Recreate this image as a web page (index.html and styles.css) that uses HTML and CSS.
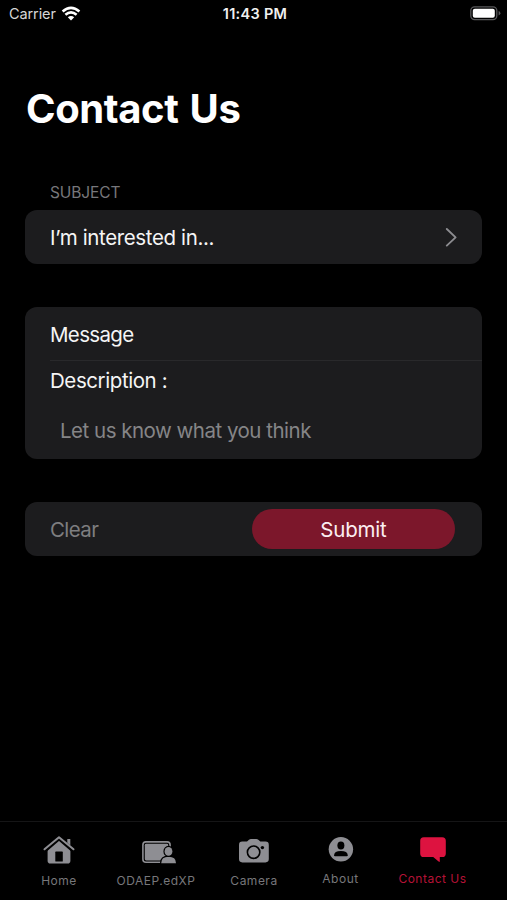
FILE: index.html
```html
<!DOCTYPE html>
<html lang="en">
<head>
<meta charset="utf-8">
<title>Contact Us</title>
<link rel="stylesheet" href="styles.css">
</head>
<body>
<div class="screen">
  <header class="status">
    <div class="status-left">
      <span class="carrier">Carrier</span>
      <svg class="wifi" width="20" height="15" viewBox="0 0 20 15" fill="none" stroke="#fff" stroke-width="2.6">
        <path d="M1.6 5.4Q10 -1.8 18.4 5.4"/>
        <path d="M4.4 8.8Q10 4 15.6 8.8"/>
        <path d="M6.8 11.3Q10 8.7 13.2 11.3L10 14.4Z" fill="#fff" stroke="none"/>
      </svg>
    </div>
    <span class="time">11:43 PM</span>
    <svg class="battery" width="31" height="15" viewBox="0 0 31 15">
      <rect x=".8" y=".8" width="26" height="12.8" rx="3.8" fill="none" stroke="#58585a" stroke-width="1.3"/>
      <rect x="2.8" y="2.7" width="22" height="9" rx="2" fill="#fff"/>
      <path d="M28.6 5Q30.4 5.6 30.4 7.2T28.6 9.4Z" fill="#58585a"/>
    </svg>
  </header>

  <main class="content">
    <h1 class="title">Contact Us</h1>
    <h2 class="section-label">SUBJECT</h2>
    <section class="card picker">
      <span class="picker-text">I’m interested in...</span>
      <svg width="12" height="20" viewBox="0 0 12 20" fill="none" stroke="#8c8c90" stroke-width="1.9" stroke-linecap="round" stroke-linejoin="round"><path d="M1.8 2L10.6 10.4L1.8 18.6"/></svg>
    </section>
    <section class="card form">
      <div class="message"><span class="message-text">Message</span></div>
      <div class="description"><span class="description-text">Description :</span></div>
      <div class="placeholder"><span class="placeholder-text">Let us know what you think</span></div>
    </section>
    <section class="card actions">
      <span class="clear">Clear</span>
      <button class="submit" type="button"><span>Submit</span></button>
    </section>
  </main>

  <nav class="tabs">
    <a class="tab">
      <svg width="32" height="28" viewBox="0 0 32 28" fill="#8e8e93">
        <path d="M16 3.6L27.4 13.4V24.8Q27.4 27.6 24.6 27.6H7.4Q4.6 27.6 4.6 24.8V13.4Z"/>
        <path d="M24.3 3H27.3V9.4L24.3 6.8Z"/>
        <path d="M2.6 15.4L16 4L29.4 15.4" fill="none" stroke="#000" stroke-width="1.6"/>
        <path d="M1.5 13.3L16 1.3L30.5 13.3" fill="none" stroke="#8e8e93" stroke-width="2" stroke-linecap="round" stroke-linejoin="round"/>
        <rect x="12.3" y="15.6" width="7.5" height="10" rx=".6" fill="#000"/>
      </svg>
      <span class="tab-label home">Home</span>
    </a>
    <a class="tab">
      <svg class="board-icon" width="34" height="28" viewBox="0 0 34 28">
        <rect x=".9" y="5.9" width="27.2" height="20.4" rx="3" fill="none" stroke="#8e8e93" stroke-width="1.6"/>
        <rect x="2.8" y="7.8" width="23.4" height="16.6" rx="1.4" fill="#8e8e93"/>
        <g fill="#8e8e93" stroke="#000" stroke-width="2.4" paint-order="stroke">
          <path d="M19.2 27.2Q19.2 20.8 26.6 20.8T34 27.2Z"/>
          <ellipse cx="26.5" cy="15.4" rx="3.9" ry="4.4"/>
        </g>
      </svg>
      <span class="tab-label board">ODAEP.edXP</span>
    </a>
    <a class="tab">
      <svg width="30" height="28" viewBox="0 0 30 28">
        <path d="M3.3 5.6H8L10 3.8Q10.8 3.1 12 3.1H17.3Q18.5 3.1 19.3 3.8L21.3 5.6H26.5Q29.8 5.6 29.8 8.9V23.1Q29.8 26.4 26.5 26.4H3.3Q0 26.4 0 23.1V8.9Q0 5.6 3.3 5.6Z" fill="#8e8e93"/>
        <circle cx="14.6" cy="16.2" r="6.2" fill="none" stroke="#000" stroke-width="1.6"/>
        <circle cx="23.4" cy="11.6" r="1.7" fill="#000"/>
      </svg>
      <span class="tab-label camera">Camera</span>
    </a>
    <a class="tab">
      <svg width="26" height="28" viewBox="0 0 26 28">
        <circle cx="12.9" cy="13.3" r="12.2" fill="#8e8e93"/>
        <ellipse cx="12.9" cy="9.6" rx="3.5" ry="4" fill="#000"/>
        <path d="M6 19.4Q6.2 15 12.9 15T19.8 19.4Q19.8 20.2 18.8 20.2H7Q6 20.2 6 19.4Z" fill="#000"/>
      </svg>
      <span class="tab-label about">About</span>
    </a>
    <a class="tab active">
      <svg width="26" height="28" viewBox="0 0 26 28">
        <path d="M3.8 1.2H22.2Q25.8 1.2 25.8 4.8V17.4Q25.8 21 22.2 21H19.8V25.2Q19.8 26.4 18.6 25.6L13.2 21H3.8Q.2 21 .2 17.4V4.8Q.2 1.2 3.8 1.2Z" fill="#dd1340"/>
      </svg>
      <span class="tab-label contact">Contact Us</span>
    </a>
  </nav>
</div>
</body>
</html>
```
FILE: styles.css
```css
* { box-sizing: border-box; }

body {
  margin: 0;
  background: #000;
  color: #f5f5f5;
  font-family: Inter, "Liberation Sans", sans-serif;
}

.screen {
  width: 507px;
  height: 900px;
  display: flex;
  flex-direction: column;
  overflow: hidden;
}

.status {
  height: 27px;
  padding: 0 6px 0 9px;
  display: grid;
  grid-template-columns: 1fr auto 1fr;
  align-items: center;
}

.status-left { display: flex; align-items: center; gap: 5px; }
.carrier { font-size: 14.5px; color: #d6d6d6; letter-spacing: -0.1px; }
.time { font-size: 14.5px; font-weight: 600; color: #f0f0f0; letter-spacing: 0.3px; }
.battery { justify-self: end; }

.content { flex: 1; padding: 0 25px; }

.title {
  margin: 57px 0 0 1px;
  font-size: 40px;
  line-height: 50px;
  font-weight: 700;
  letter-spacing: -0.4px;
  word-spacing: 2px;
  color: #fff;
  white-space: nowrap;
}

.section-label {
  margin: 49px 0 7px 25px;
  font-size: 15.5px;
  line-height: 20px;
  font-weight: 400;
  letter-spacing: -0.1px;
  color: #77777b;
}

.card {
  width: 457px;
  background: #1c1c1e;
  border-radius: 12px;
  font-size: 20.5px;
}

.picker {
  height: 54px;
  padding: 0 25px;
  display: flex;
  align-items: center;
  justify-content: space-between;
}

.picker-text { letter-spacing: -0.37px; }

.form {
  margin-top: 43px;
  height: 152px;
  padding-left: 25px;
  line-height: 28px;
}

.message { height: 54px; padding-top: 14px; border-bottom: 1px solid #29292b; letter-spacing: -0.65px; }
.description { padding-top: 6px; letter-spacing: -0.42px; }
.placeholder { padding: 22px 0 0 10px; color: #858587; letter-spacing: -0.5px; }

.actions {
  margin-top: 43px;
  height: 54px;
  padding: 0 27px 0 25px;
  display: flex;
  align-items: center;
  justify-content: space-between;
}

.clear { color: #7e7e80; letter-spacing: -0.6px; }

.submit {
  width: 203px;
  height: 40px;
  padding: 0;
  border: 0;
  border-radius: 20px;
  background: #7c172b;
  color: #fbeef1;
  font: inherit;
  letter-spacing: -0.2px;
}

.tabs {
  height: 79px;
  padding: 14px 19px 0 10px;
  border-top: 1px solid #151516;
  display: grid;
  grid-template-columns: 98px 96px 100px 73px 111px;
}

.tab {
  display: flex;
  flex-direction: column;
  align-items: center;
  color: #77777b;
}

.board-icon { margin-left: 6px; }

.tab-label {
  margin-top: 9px;
  font-size: 12px;
  line-height: 16px;
  letter-spacing: 0.5px;
  white-space: nowrap;
}

.about, .contact { margin-top: 7px; }
.active { color: #b51236; }
```
